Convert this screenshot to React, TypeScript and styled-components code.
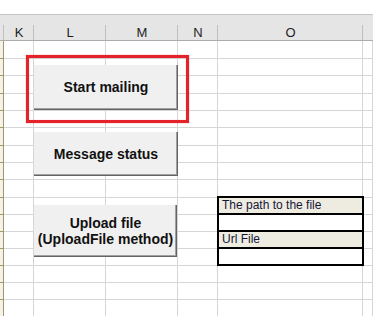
import * as React from 'react';
import styled, { createGlobalStyle } from 'styled-components';

const GlobalStyle = createGlobalStyle`
    html, body {
        margin: 0;
        padding: 0;
        background: #ffffff;
        overflow: hidden;
    }
    body {
        font-family: "Liberation Sans", Arial, sans-serif;
    }
`;

// widths include the 1px right gridline
const colWidths = [4, 30, 72, 72, 40, 145];
const colNames = ['', 'K', 'L', 'M', 'N', 'O', ''];
// heights include the 1px bottom gridline
const rowHeights = [18, 17, 18, 17, 17, 18, 17, 17, 18, 17, 17, 17, 17, 17, 17, 17];

const Page = styled.div`
    position: relative;
    width: 373px;
    height: 316px;
    overflow: hidden;
`;

const TopStrip = styled.div`
    height: 14px;
    border-bottom: 1px solid #c6c6c6;
    background: #ffffff;
`;

const Sheet = styled.div`
    display: grid;
    grid-template-columns: ${colWidths.map((w) => w + 'px').join(' ')} 1fr;
    grid-template-rows: 26px ${rowHeights.map((h) => h + 'px').join(' ')};
`;

const HeadCell = styled.div<{ $last?: boolean }>`
    box-sizing: border-box;
    background: ${(p) => p.$last
        ? '#e5e5e5'
        : 'linear-gradient(#bfbfbf, #bfbfbf) right bottom / 1px 15px no-repeat, #e5e5e5'};
    border-bottom: 1px solid #ababab;
    padding-top: 10px;
    font-size: 13px;
    line-height: 15px;
    color: #1e1e1e;
    text-align: center;
`;

const RowHead = styled.div`
    box-sizing: border-box;
    background: #f4f2ea;
    border-right: 1px solid #a29867;
    border-bottom: 1px solid #a29867;
`;

const Cell = styled.div`
    box-sizing: border-box;
    border-right: 1px solid #d6d6d6;
    border-bottom: 1px solid #d6d6d6;
`;

const FileTable = styled.div`
    grid-column: 6;
    grid-row: 11 / span 4;
    margin: -2px -1px 0 -1px;
    border: 2px solid #000;
    background: #000;
    display: flex;
    flex-direction: column;
    gap: 2px;
    position: relative;
    z-index: 1;
`;

const TableRow = styled.div<{ $label?: boolean }>`
    flex: 1;
    background: ${(p) => (p.$label ? '#eeece1' : '#ffffff')};
    font-size: 12px;
    line-height: 15px;
    padding-left: 3px;
    color: #16163a;
    white-space: nowrap;
`;

const Overlay = styled.div<{ $left: number; $top: number; $width: number; $height: number }>`
    position: absolute;
    left: ${(p) => p.$left}px;
    top: ${(p) => p.$top}px;
    width: ${(p) => p.$width}px;
    height: ${(p) => p.$height}px;
    box-sizing: border-box;
    z-index: 2;
`;

const FormButton = styled(Overlay)`
    background: #f0f0f0;
    box-shadow: inset -1px -1px 0 #646464, inset -2px -2px 0 #a0a0a0;
    display: flex;
    align-items: center;
    justify-content: center;
    text-align: center;
    font-weight: bold;
    font-size: 14px;
    line-height: 16px;
    color: #111;
    padding-bottom: 1px;
`;

const Highlight = styled(Overlay)`
    border: 3px solid #e4222a;
    box-shadow: 0 0 1px rgba(228, 34, 42, 0.6), inset 0 0 1px rgba(228, 34, 42, 0.6);
    pointer-events: none;
`;

export default function App() {
    const cells: React.ReactNode[] = [];
    rowHeights.forEach((_h, r) => {
        cells.push(<RowHead key={`h${r}`} />);
        for (let c = 1; c < colNames.length; c++) {
            cells.push(<Cell key={`c${r}-${c}`} style={{ gridRow: r + 2, gridColumn: c + 1 }} />);
        }
    });

    return (
        <Page>
            <GlobalStyle />
            <TopStrip />
            <Sheet>
                {colNames.map((n, i) => (
                    <HeadCell key={i} $last={i === colNames.length - 1}>{n}</HeadCell>
                ))}
                {cells}
                <FileTable>
                    <TableRow $label>The path to the file</TableRow>
                    <TableRow />
                    <TableRow $label>Url File</TableRow>
                    <TableRow />
                </FileTable>
            </Sheet>
            <Highlight $left={26} $top={55} $width={163} $height={68} />
            <FormButton $left={34} $top={65} $width={144} $height={45}>Start mailing</FormButton>
            <FormButton $left={34} $top={132} $width={144} $height={44}>Message status</FormButton>
            <FormButton $left={34} $top={205} $width={143} $height={52}>
                Upload file<br />(UploadFile method)
            </FormButton>
        </Page>
    );
}
